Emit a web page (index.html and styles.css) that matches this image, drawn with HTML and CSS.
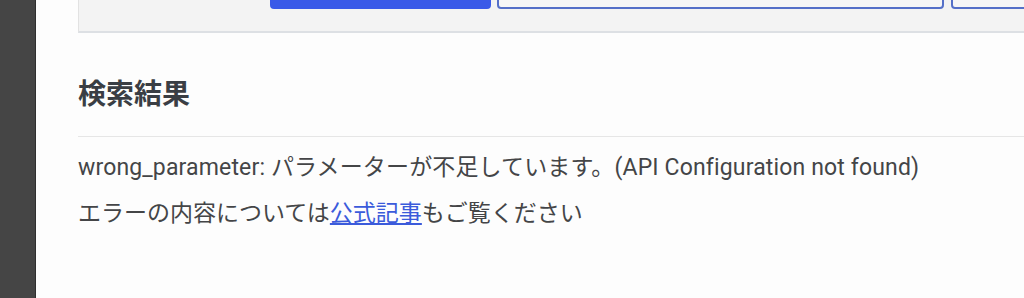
FILE: index.html
```html
<!DOCTYPE html>
<html lang="ja">
<head>
<meta charset="UTF-8">
<meta name="viewport" content="width=device-width, initial-scale=1.0">
<title>検索結果</title>
<link rel="stylesheet" href="styles.css">
</head>
<body>

<div class="layout">
    <aside class="sidebar"></aside>

    <main class="content">
        <section class="search-panel">
            <button class="btn-search" type="button" aria-label="検索"></button>
            <input class="field" type="text">
            <input class="field field-rest" type="text">
        </section>

        <section class="results">
            <h2 class="results-title">検索結果</h2>
            <p class="error-msg">wrong_parameter: パラメーターが不足しています。(API Configuration not found)</p>
            <p>エラーの内容については<a href="#">公式記事</a>もご覧ください</p>
        </section>
    </main>
</div>

</body>
</html>
```

FILE: styles.css
```css
body {
    margin: 0;
    padding: 0;
    background-color: #fdfdfd;
    font-family: Roboto, "Noto Sans CJK JP", sans-serif;
    color: #444547;
    overflow: hidden;
}

.layout {
    display: flex;
    min-height: 298px;
}

.sidebar {
    flex: 0 0 35px;
    background-color: #454545;
    border-right: 1px solid #2f2f2f;
}

.content {
    flex: 1;
    padding-left: 42px;
    min-width: 0;
    overflow: hidden;
}

.search-panel {
    display: flex;
    align-items: flex-end;
    gap: 6px;
    margin-top: -40px;
    height: 49px;
    padding: 0 0 22px 191px;
    background-color: #f3f3f3;
    border-left: 1px solid #e2e2e2;
    border-bottom: 2px solid #dde0e4;
}

.btn-search {
    flex: 0 0 221px;
    height: 48px;
    border: none;
    border-radius: 4px;
    background-color: #3a5ae8;
}

.field {
    flex: 0 0 447px;
    height: 48px;
    box-sizing: border-box;
    border: 2px solid #5570c8;
    border-radius: 4px;
    background-color: #f6f6f6;
}

.field-rest {
    flex: 1 0 120px;
    margin-left: 1px;
}

.results {
    padding-top: 43px;
}

.results-title {
    margin: 0;
    padding-bottom: 26px;
    font-family: "Noto Sans CJK JP", sans-serif;
    font-size: 28px;
    font-weight: 700;
    line-height: 1.2;
    color: #3a3e44;
    border-bottom: 1px solid #e6e6e6;
}

.results p {
    margin: 0 0 13px;
    font-size: 23px;
    line-height: 33px;
}

.results p:first-of-type {
    margin-top: 14px;
}

.error-msg {
    letter-spacing: 0.15px;
}

.results a {
    color: #3b5bdb;
    text-decoration: underline;
}
```
